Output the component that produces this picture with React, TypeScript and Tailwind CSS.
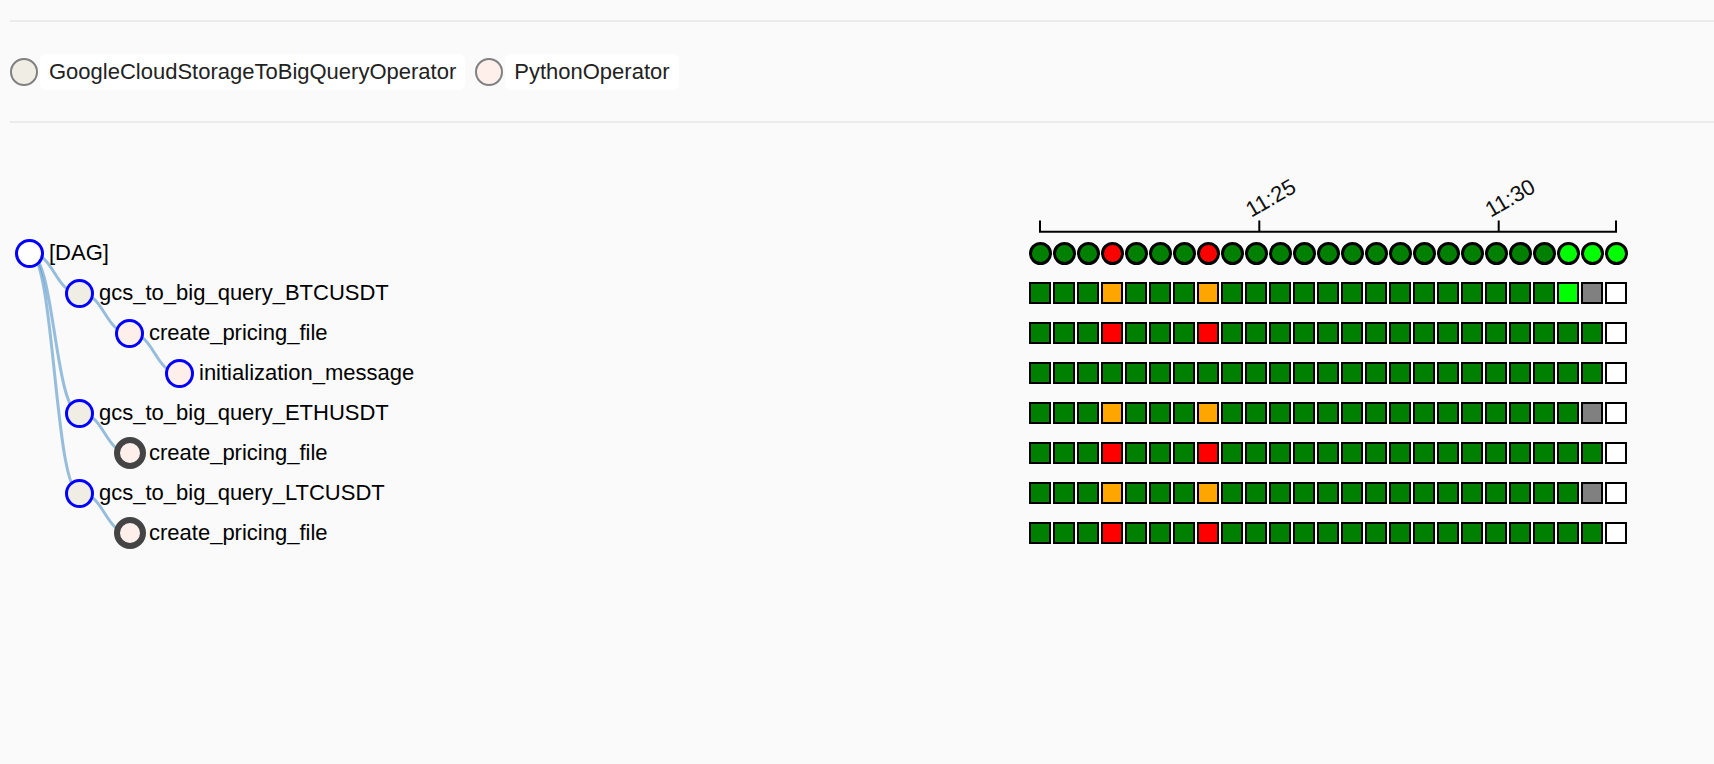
import React from 'react';

// ── Types ─────────────────────────────────────────────────────────────

type Kind = 'dag' | 'gcs' | 'python';

interface TreeRow {
  label: string;
  depth: number;
  kind: Kind;
  parent?: number;
  collapsed?: boolean;
  /** one char per run: g success, r failed, o upstream_failed, l running, q queued, w none */
  states: string;
}

// ── Constants ─────────────────────────────────────────────────────────

const STATE_BG: Record<string, string> = {
  g: 'bg-[#008000]',
  r: 'bg-[#ff0000]',
  o: 'bg-[#ffa500]',
  l: 'bg-[#00ff00]',
  q: 'bg-[#808080]',
  w: 'bg-white',
};

const runs = (marks: Record<number, string>, tail: string) =>
  Array.from({ length: 25 - tail.length }, (_, i) => marks[i] ?? 'g').join('') + tail;

const ROWS: TreeRow[] = [
  { label: '[DAG]', depth: 0, kind: 'dag', states: runs({ 3: 'r', 7: 'r' }, 'lll') },
  { label: 'gcs_to_big_query_BTCUSDT', depth: 1, kind: 'gcs', parent: 0, states: runs({ 3: 'o', 7: 'o' }, 'lqw') },
  { label: 'create_pricing_file', depth: 2, kind: 'python', parent: 1, states: runs({ 3: 'r', 7: 'r' }, 'w') },
  { label: 'initialization_message', depth: 3, kind: 'python', parent: 2, states: runs({}, 'w') },
  { label: 'gcs_to_big_query_ETHUSDT', depth: 1, kind: 'gcs', parent: 0, states: runs({ 3: 'o', 7: 'o' }, 'qw') },
  { label: 'create_pricing_file', depth: 2, kind: 'python', parent: 4, collapsed: true, states: runs({ 3: 'r', 7: 'r' }, 'w') },
  { label: 'gcs_to_big_query_LTCUSDT', depth: 1, kind: 'gcs', parent: 0, states: runs({ 3: 'o', 7: 'o' }, 'qw') },
  { label: 'create_pricing_file', depth: 2, kind: 'python', parent: 6, collapsed: true, states: runs({ 3: 'r', 7: 'r' }, 'w') },
];

const INDENT = ['pl-[15px]', 'pl-[65px]', 'pl-[115px]', 'pl-[165px]'];

const NODE_FILL: Record<Kind, string> = {
  dag: 'bg-white',
  gcs: 'bg-[#f0ede4]',
  python: 'bg-[#ffefeb]',
};

const ROW_H = 40;
const cx = (depth: number) => 29.5 + depth * 50;
const cy = (i: number) => ROW_H / 2 + i * ROW_H;

// ── Pieces ────────────────────────────────────────────────────────────

const LegendItem: React.FC<{ fill: string; label: string }> = ({ fill, label }) => (
  <div className="flex items-center">
    <span className={`h-[28px] w-[28px] rounded-full border-2 border-[#808080] ${fill}`} />
    <span className="ml-[2px] flex h-[36px] items-center rounded-[6px] bg-white px-[9px] text-[22px] leading-none text-[#222]">
      {label}
    </span>
  </div>
);

const TimeAxis: React.FC = () => (
  <svg width={620} height={70} className="overflow-visible">
    <path d="M11,57.5V68.7H587V57.5" fill="none" stroke="#000" strokeWidth={2} />
    {[
      { x: 230.3, t: '11:25' },
      { x: 469.7, t: '11:30' },
    ].map((tk) => (
      <g key={tk.t} transform={`translate(${tk.x},68.7)`}>
        <line y2={-11.2} stroke="#000" strokeWidth={2} />
        <text
          transform="rotate(-30)"
          y={-16}
          fontSize={22}
          fill="#111"
          fontFamily="'Liberation Sans', Arial, sans-serif"
        >
          {tk.t}
        </text>
      </g>
    ))}
  </svg>
);

const NodeCircle: React.FC<{ row: TreeRow }> = ({ row }) => (
  <div className="flex h-[29px] w-[29px] shrink-0 items-center justify-center">
    {row.collapsed ? (
      <span className="h-[32px] w-[32px] shrink-0 rounded-full border-[6px] border-[#444444] bg-[#ffefeb]" />
    ) : (
      <span className={`h-[29px] w-[29px] shrink-0 rounded-full border-[3px] border-[#0000ff] ${NODE_FILL[row.kind]}`} />
    )}
  </div>
);

// ── Component ─────────────────────────────────────────────────────────

export default function App() {
  return (
    <div className="min-h-screen bg-[#fafafa] font-['Liberation_Sans',Arial,sans-serif]">
      {/* Legend */}
      <div className="pl-[10px] pt-[20px]">
        <div className="h-[2px] bg-[#ebebeb]" />
        <div className="flex h-[99px] items-center gap-[10px]">
          <LegendItem fill="bg-[#f0ede4]" label="GoogleCloudStorageToBigQueryOperator" />
          <LegendItem fill="bg-[#ffefeb]" label="PythonOperator" />
        </div>
        <div className="h-[2px] bg-[#ebebeb]" />
      </div>

      {/* Tree view */}
      <div className="pt-[40px]">
        <div className="flex h-[70px]">
          <div className="w-[1029px] shrink-0" />
          <TimeAxis />
        </div>

        <div className="relative">
          <svg className="absolute left-0 top-0" width={400} height={ROWS.length * ROW_H}>
            {ROWS.map((r, i) => {
              if (r.parent === undefined) return null;
              const p = ROWS[r.parent];
              const x0 = cx(p.depth);
              const y0 = cy(r.parent);
              const x1 = cx(r.depth);
              const y1 = cy(i);
              const mx = (x0 + x1) / 2;
              return (
                <path
                  key={i}
                  d={`M${x0},${y0}C${mx},${y0} ${mx},${y1} ${x1},${y1}`}
                  fill="none"
                  stroke="#3182bd"
                  strokeOpacity={0.5}
                  strokeWidth={3}
                />
              );
            })}
          </svg>

          {ROWS.map((r, i) => (
            <div key={i} className="relative flex h-[40px] items-center">
              <div className={`flex w-[1029px] shrink-0 items-center ${INDENT[r.depth]}`}>
                <NodeCircle row={r} />
                <span className="ml-[5px] whitespace-nowrap text-[22px] leading-none text-black">{r.label}</span>
              </div>
              {r.kind === 'dag' ? (
                <div className="flex gap-[1px]">
                  {r.states.split('').map((s, j) => (
                    <span key={j} className={`h-[23px] w-[23px] rounded-full border-[3px] border-black ${STATE_BG[s]}`} />
                  ))}
                </div>
              ) : (
                <div className="flex gap-[2px]">
                  {r.states.split('').map((s, j) => (
                    <span key={j} className={`h-[22px] w-[22px] border-2 border-black ${STATE_BG[s]}`} />
                  ))}
                </div>
              )}
            </div>
          ))}
        </div>
      </div>
    </div>
  );
}
